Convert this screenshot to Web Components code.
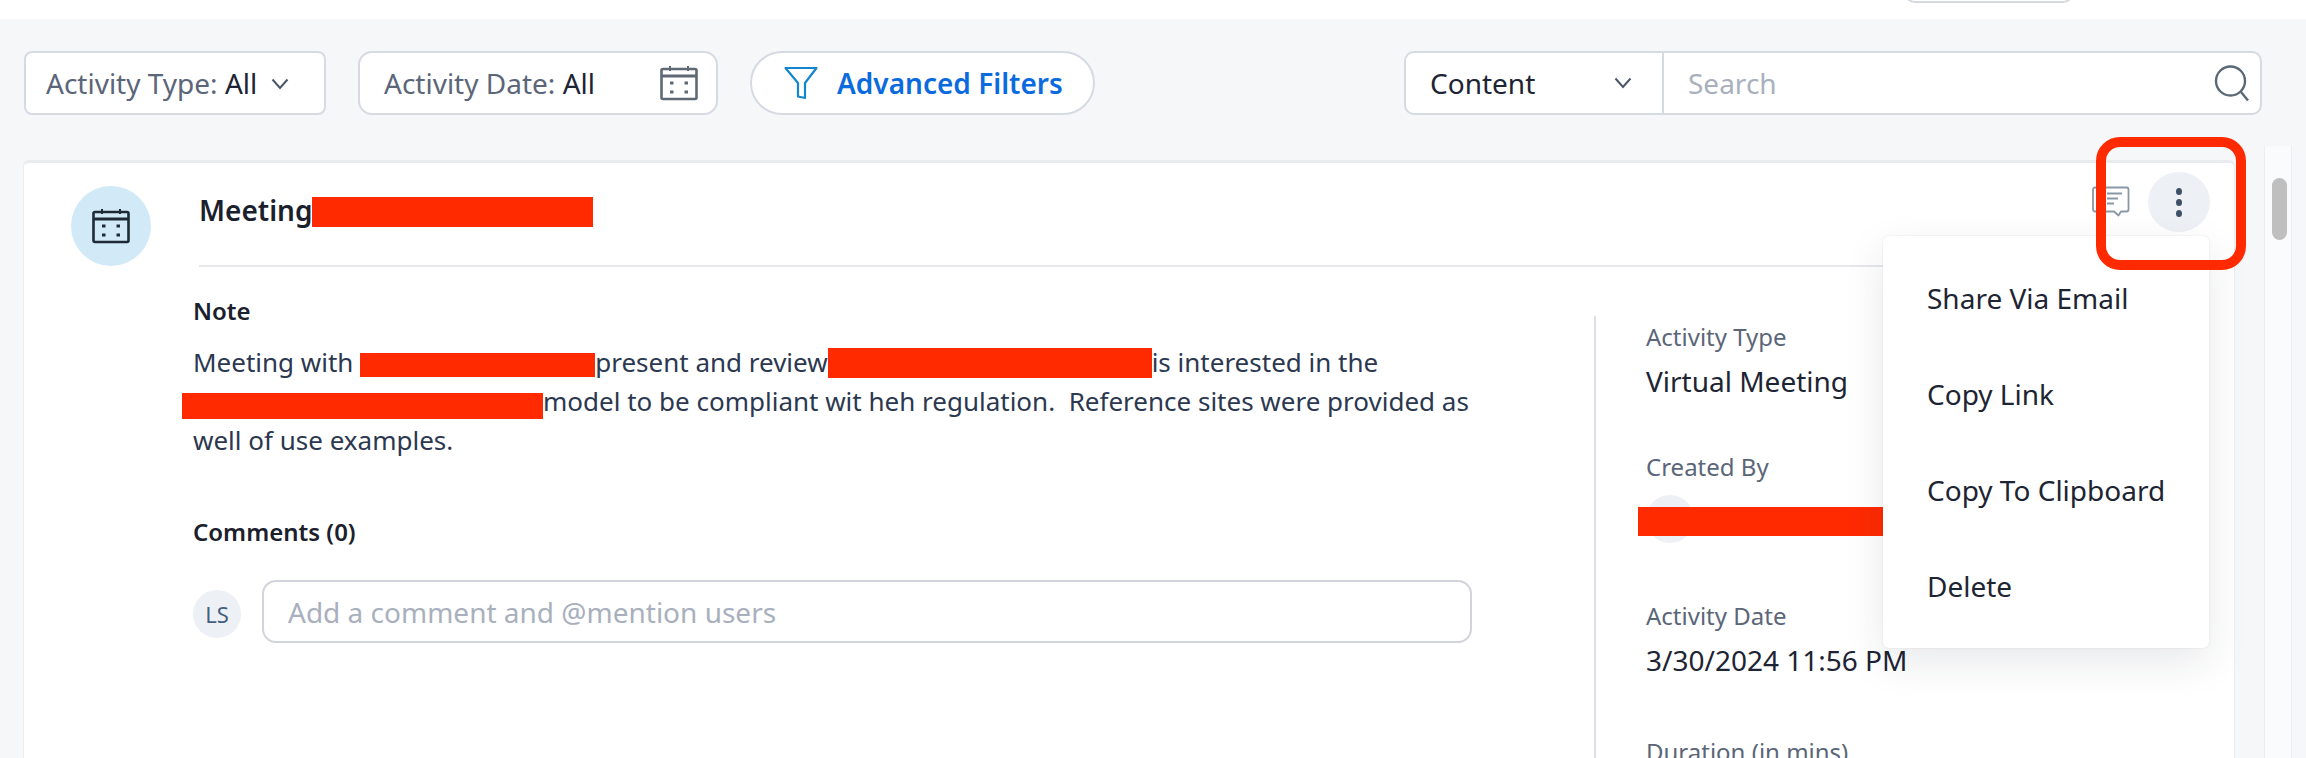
<!doctype html>
<html>
<head>
<meta charset="utf-8">
<title>Activity</title>
<style>
  html, body { margin: 0; height: 758px; overflow: hidden; background: #f6f7f9; }
  body { font-family: "Noto Sans", sans-serif; color: #1d2433; }
</style>
</head>
<body>
<top-strip></top-strip>
<filter-bar>
  <filter-select label="Activity Type:" value="All"></filter-select>
  <date-filter label="Activity Date:" value="All"></date-filter>
  <advanced-filters>Advanced Filters</advanced-filters>
  <search-box slot="end"></search-box>
</filter-bar>
<activity-view>
  <activity-card>
    <span slot="title">Meeting<redact-mark w="281" h="30" top="-1"></redact-mark></span>
    <span slot="note">Meeting with <redact-mark w="235" h="24" top="0"></redact-mark>present and review<redact-mark w="324" h="30" top="-2"></redact-mark>is interested in the<br><redact-mark w="361" h="26" top="2" left="-11"></redact-mark>model to be compliant wit heh regulation.&nbsp; Reference sites were provided as<br>well of use examples.</span>
    <detail-field slot="details" h="130" label="Activity Type" value="Virtual Meeting"></detail-field>
    <detail-field slot="details" h="149" label="Created By" person></detail-field>
    <detail-field slot="details" h="136" label="Activity Date" value="3/30/2024 11:56 PM"></detail-field>
    <detail-field slot="details" h="40" label="Duration (in mins)"></detail-field>
    <action-menu slot="menu">
      <menu-row>Share Via Email</menu-row>
      <menu-row>Copy Link</menu-row>
      <menu-row>Copy To Clipboard</menu-row>
      <menu-row>Delete</menu-row>
    </action-menu>
  </activity-card>
</activity-view>

<script>
const calendarIcon = `
  <svg viewBox="0 0 38 36" fill="none" stroke="currentColor" stroke-width="2.6">
    <rect x="1.5" y="4" width="35" height="30" rx="1.5"/>
    <path d="M1.5 11h35" stroke-width="3"/>
    <path d="M10 1v5M28 1v5" stroke-width="2"/>
    <path d="M10 18h3.5M24.500 18h3.500M10 27h3.500M24.500 27h3.500" stroke-width="2.800"/>
  </svg>`

const chevron = `
  <svg viewBox="0 0 18 12" width="18" height="12" fill="none" stroke="#4b5668" stroke-width="2">
    <path d="M1.500 1.500L9 10l7.500-8.500"/>
  </svg>`

function define(name, html, setup) {
  customElements.define(name, class extends HTMLElement {
    constructor() {
      super()
      this.attachShadow({mode: 'open'})
    }
    connectedCallback() {
      this.shadowRoot.innerHTML = typeof html === 'function' ? html(this) : html
      if (setup) setup(this)
    }
  })
}

define('top-strip', `
  <style>
    :host { display: flex; justify-content: flex-end; height: 19px; background: #fff; overflow: hidden; padding-right: 232px; }
    div { width: 170px; height: 22px; margin-top: -19px; box-sizing: border-box; border: 2px solid #d5d8de; border-radius: 12px; }
  </style>
  <div></div>
`)

define('filter-bar', `
  <style>
    :host { display: flex; align-items: stretch; height: 64px; padding: 32px 44px 45px 24px; }
    .left { display: flex; gap: 32px; flex: 1; }
  </style>
  <div class="left"><slot></slot></div>
  <slot name="end"></slot>
`)

define('filter-select', el => `
  <style>
    :host { display: flex; align-items: center; gap: 14px; box-sizing: border-box; width: 302px; padding: 0 30px 0 20px; background: #fff; border: 2px solid #d5dae3; border-radius: 8px; font-size: 28px; color: #5b6678; white-space: nowrap; }
    b { font-weight: 400; color: #1d2433; }
    svg { margin-top: 1px; flex: none; }
  </style>
  <span>${el.getAttribute('label')} <b>${el.getAttribute('value')}</b></span>${chevron}
`)

define('date-filter', el => `
  <style>
    :host { display: flex; align-items: center; justify-content: space-between; box-sizing: border-box; width: 360px; padding: 0 18px 0 24px; background: #fff; border: 2px solid #d5dae3; border-radius: 14px; font-size: 28px; color: #5b6678; white-space: nowrap; }
    b { font-weight: 400; color: #1d2433; }
    svg { width: 38px; height: 36px; color: #5f6974; }
  </style>
  <span>${el.getAttribute('label')} <b>${el.getAttribute('value')}</b></span>${calendarIcon}
`)

define('advanced-filters', `
  <style>
    :host { display: flex; align-items: center; gap: 19px; box-sizing: border-box; width: 345px; padding-left: 32px; background: #fff; border: 2px solid #d5dae3; border-radius: 32px; font-size: 28px; font-weight: 600; color: #0b6bde; white-space: nowrap; }
    svg { width: 34px; height: 34px; }
  </style>
  <svg viewBox="0 0 34 34" fill="none" stroke="#1485cf" stroke-width="2.200" stroke-linejoin="round">
    <path d="M1.500 2h31L21 17v15l-7-1.500V17z"/>
  </svg>
  <slot></slot>
`)

define('search-box', `
  <style>
    :host { display: flex; box-sizing: border-box; width: 858px; background: #fff; border: 2px solid #d5dae3; border-radius: 10px; font-size: 28px; }
    .kind { display: flex; align-items: center; justify-content: space-between; box-sizing: border-box; width: 258px; padding: 0 30px 0 24px; border-right: 2px solid #d5dae3; }
    .query { display: flex; flex: 1; align-items: center; justify-content: space-between; padding: 0 10px 0 24px; color: #a9b0bd; }
    svg.glass { width: 36px; height: 38px; }
  </style>
  <div class="kind"><span>Content</span>${chevron}</div>
  <div class="query">
    <span>Search</span>
    <svg class="glass" viewBox="0 0 36 38" fill="none" stroke="#5b6876" stroke-width="2.400">
      <circle cx="16.500" cy="17" r="14.500"/><path d="M27 28l7 8.500"/>
    </svg>
  </div>
`)

define('activity-view', `
  <style>
    :host { display: flex; align-items: stretch; gap: 29px; height: 598px; padding: 0 14px 0 23px; }
    .track { position: relative; flex: none; width: 28px; margin-top: -14px; height: 612px; box-sizing: border-box; background: #fafbfc; border: solid #eceef1; border-width: 0 1px; }
    .thumb { width: 15px; height: 62px; margin: 32px 0 0 7px; border-radius: 8px; background: #bfbfbf; }
    ::slotted(activity-card) { flex: 1; }
  </style>
  <slot></slot>
  <div class="track"><div class="thumb"></div></div>
`)

define('activity-card', `
  <style>
    :host { display: block; position: relative; box-sizing: border-box; background: #fff; border-top: 3px solid #e9ebee; border-left: 1px solid #eceef1; border-right: 1px solid #eceef1; border-radius: 6px 6px 0 0; }
    .head { display: flex; gap: 48px; padding: 23px 24px 0 47px; }
    .type { flex: none; display: grid; place-items: center; width: 80px; height: 80px; border-radius: 50%; background: #d2e9f8; color: #1f2a37; }
    .type svg { width: 38px; height: 36px; }
    .title { display: flex; flex: 1; align-items: flex-start; justify-content: space-between; height: 81px; box-sizing: border-box; border-bottom: 2px solid #e6e8ec; font-size: 28px; font-weight: 600; color: #1a202c; padding-top: 5px; }
    .tools { display: flex; gap: 18px; align-items: center; margin-top: -19px; }
    .tools svg.talk { width: 38px; height: 32px; }
    .more { display: flex; flex-direction: column; align-items: center; justify-content: center; gap: 4px; width: 62px; height: 60px; border-radius: 50%; background: #edf0f4; }
    .more i { width: 6px; height: 7px; border-radius: 50%; background: #3d5068; }
    .body { display: flex; padding: 29px 0 0 169px; }
    .main { box-sizing: border-box; width: 1401px; padding-right: 122px; }
    h4 { margin: 0; font-size: 24px; line-height: 30px; font-weight: 600; color: #1a202c; }
    .text { margin-top: 17px; height: 117px; font-size: 26px; line-height: 39px; color: #2b3850; white-space: nowrap; }
    .count { margin-top: 57px; }
    .comment { display: flex; align-items: center; gap: 21px; margin-top: 33px; }
    .initials { flex: none; display: grid; place-items: center; width: 48px; height: 48px; margin-top: 5px; border-radius: 50%; background: #edf0f4; font-size: 22px; color: #44607f; }
    .input { flex: 1; box-sizing: border-box; height: 63px; display: flex; align-items: center; padding-left: 24px; border: 2px solid #d1d4da; border-radius: 14px; font-size: 28px; color: #a9b0bd; }
    .details { flex: 1; box-sizing: border-box; height: 520px; margin-top: 20px; padding: 6px 0 0 50px; border-left: 2px solid #dcdfe4; }
    .frame { position: absolute; left: 2072px; top: -26px; width: 150px; height: 133px; box-sizing: border-box; border: 10px solid #ff2a00; border-radius: 24px; }
  </style>
  <div class="head">
    <div class="type">${calendarIcon}</div>
    <div class="title">
      <slot name="title"></slot>
      <div class="tools">
        <svg class="talk" viewBox="0 0 38 32" fill="none" stroke="#8a97a5" stroke-width="1.800" stroke-linejoin="round">
          <path d="M3 1.500h31.500a2 2 0 0 1 2 2v20a2 2 0 0 1-2 2H29l-2.500 4-4.500-4H3a2 2 0 0 1-2-2v-20a2 2 0 0 1 2-2z"/>
          <path d="M15 7.500h15M15 12.500h11M15 17.500h7" stroke-width="2"/>
        </svg>
        <div class="more"><i></i><i></i><i></i></div>
      </div>
    </div>
  </div>
  <div class="body">
    <div class="main">
      <h4>Note</h4>
      <div class="text"><slot name="note"></slot></div>
      <h4 class="count">Comments (0)</h4>
      <div class="comment">
        <div class="initials">LS</div>
        <div class="input">Add a comment and @mention users</div>
      </div>
    </div>
    <div class="details"><slot name="details"></slot></div>
  </div>
  <slot name="menu"></slot>
  <div class="frame"></div>
`)

define('redact-mark', `
  <style>
    :host { display: inline-block; position: relative; vertical-align: middle; background: #ff2a00; }
  </style>
`, el => {
  el.style.width = el.getAttribute('w') + 'px'
  el.style.height = el.getAttribute('h') + 'px'
  el.style.top = (el.getAttribute('top') || 0) + 'px'
  if (el.hasAttribute('left')) el.style.marginLeft = el.getAttribute('left') + 'px'
})

define('detail-field', el => `
  <style>
    :host { display: block; font-size: 24px; color: #5b6678; }
    .label { line-height: 30px; }
    .value { margin-top: 11px; font-size: 28px; line-height: 36px; color: #1d2433; white-space: nowrap; }
    .who { position: relative; width: 48px; height: 48px; margin-top: 13px; border-radius: 50%; background: #edf0f4; }
    .who redact-mark { position: absolute; left: -8px; }
  </style>
  <div class="label">${el.getAttribute('label')}</div>
  ${el.hasAttribute('person')
    ? '<div class="who"><redact-mark w="246" h="29" top="12"></redact-mark></div>'
    : el.hasAttribute('value') ? `<div class="value">${el.getAttribute('value')}</div>` : ''}
`, el => { el.style.height = el.getAttribute('h') + 'px' })

define('action-menu', `
  <style>
    :host { position: absolute; left: 1859px; top: 73px; width: 326px; height: 412px; box-sizing: border-box; padding-top: 14px; background: #fff; border-radius: 6px; box-shadow: 0 0 2px rgba(30,40,60,.12), 0 14px 40px rgba(30,40,60,.10); }
  </style>
  <slot></slot>
`)

define('menu-row', `
  <style>
    :host { display: flex; align-items: center; height: 96px; padding-left: 44px; font-size: 28px; color: #1d2433; white-space: nowrap; }
  </style>
  <slot></slot>
`)
</script>
</body>
</html>
